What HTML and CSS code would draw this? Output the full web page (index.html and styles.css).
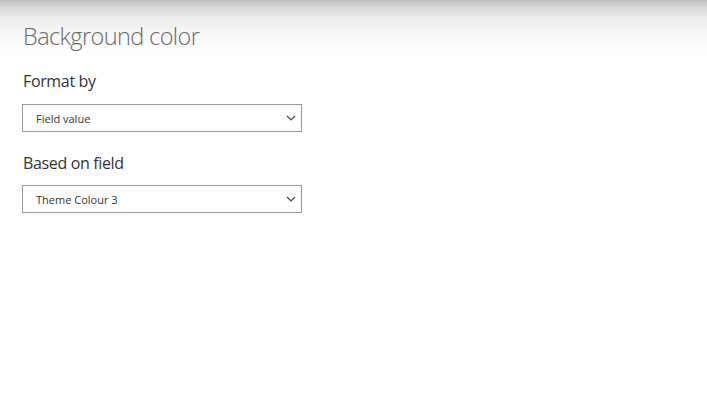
FILE: index.html
```html
<!DOCTYPE html>
<html>
<head>
<meta charset="utf-8">
<link rel="stylesheet" href="styles.css">
</head>
<body>
<div class="pane">
  <h1 class="title">Background color</h1>
  <div class="field">
    <div class="label">Format by</div>
    <div class="select"><span>Field value</span>
      <svg class="chev" width="10" height="6" viewBox="0 0 10 6"><path d="M1 1 L5 5 L9 1" fill="none" stroke="#444" stroke-width="1.2"/></svg>
    </div>
  </div>
  <div class="field">
    <div class="label">Based on field</div>
    <div class="select"><span>Theme Colour 3</span>
      <svg class="chev" width="10" height="6" viewBox="0 0 10 6"><path d="M1 1 L5 5 L9 1" fill="none" stroke="#444" stroke-width="1.2"/></svg>
    </div>
  </div>
</div>
</body>
</html>
```
FILE: styles.css
```css
html, body {
  margin: 0;
  height: 100%;
}
body {
  background: linear-gradient(to bottom, #bcbcbc 0px, #d9d9d9 8px, #ececec 18px, #f6f6f6 30px, #fcfcfc 45px, #ffffff 62px) no-repeat;
  background-color: #fff;
  font-family: "Open Sans", "Noto Sans", sans-serif;
  width: 707px;
  height: 410px;
  overflow: hidden;
}
.pane {
  padding: 21px 0 0 22px;
  display: flex;
  flex-direction: column;
}
.title {
  margin: 0 0 0 1px;
  font-size: 23.5px;
  line-height: 30px;
  font-weight: 300;
  letter-spacing: -0.6px;
  color: #6b6b6b;
}
.field {
  display: flex;
  flex-direction: column;
  margin-top: 20px;
}
.field + .field {
  margin-top: 21px;
}
.label {
  margin-left: 1px;
  font-size: 16px;
  line-height: 20px;
  letter-spacing: -0.35px;
  color: #333;
}
.select {
  margin-top: 13px;
  box-sizing: border-box;
  width: 280px;
  height: 28px;
  border: 1px solid #9a9a9a;
  background: #fff;
  display: flex;
  align-items: center;
  justify-content: space-between;
  padding: 0 5px 0 13px;
  font-size: 11px;
  color: #333;
}
.field + .field .select {
  margin-top: 12px;
}
.chev {
  display: block;
}
```
